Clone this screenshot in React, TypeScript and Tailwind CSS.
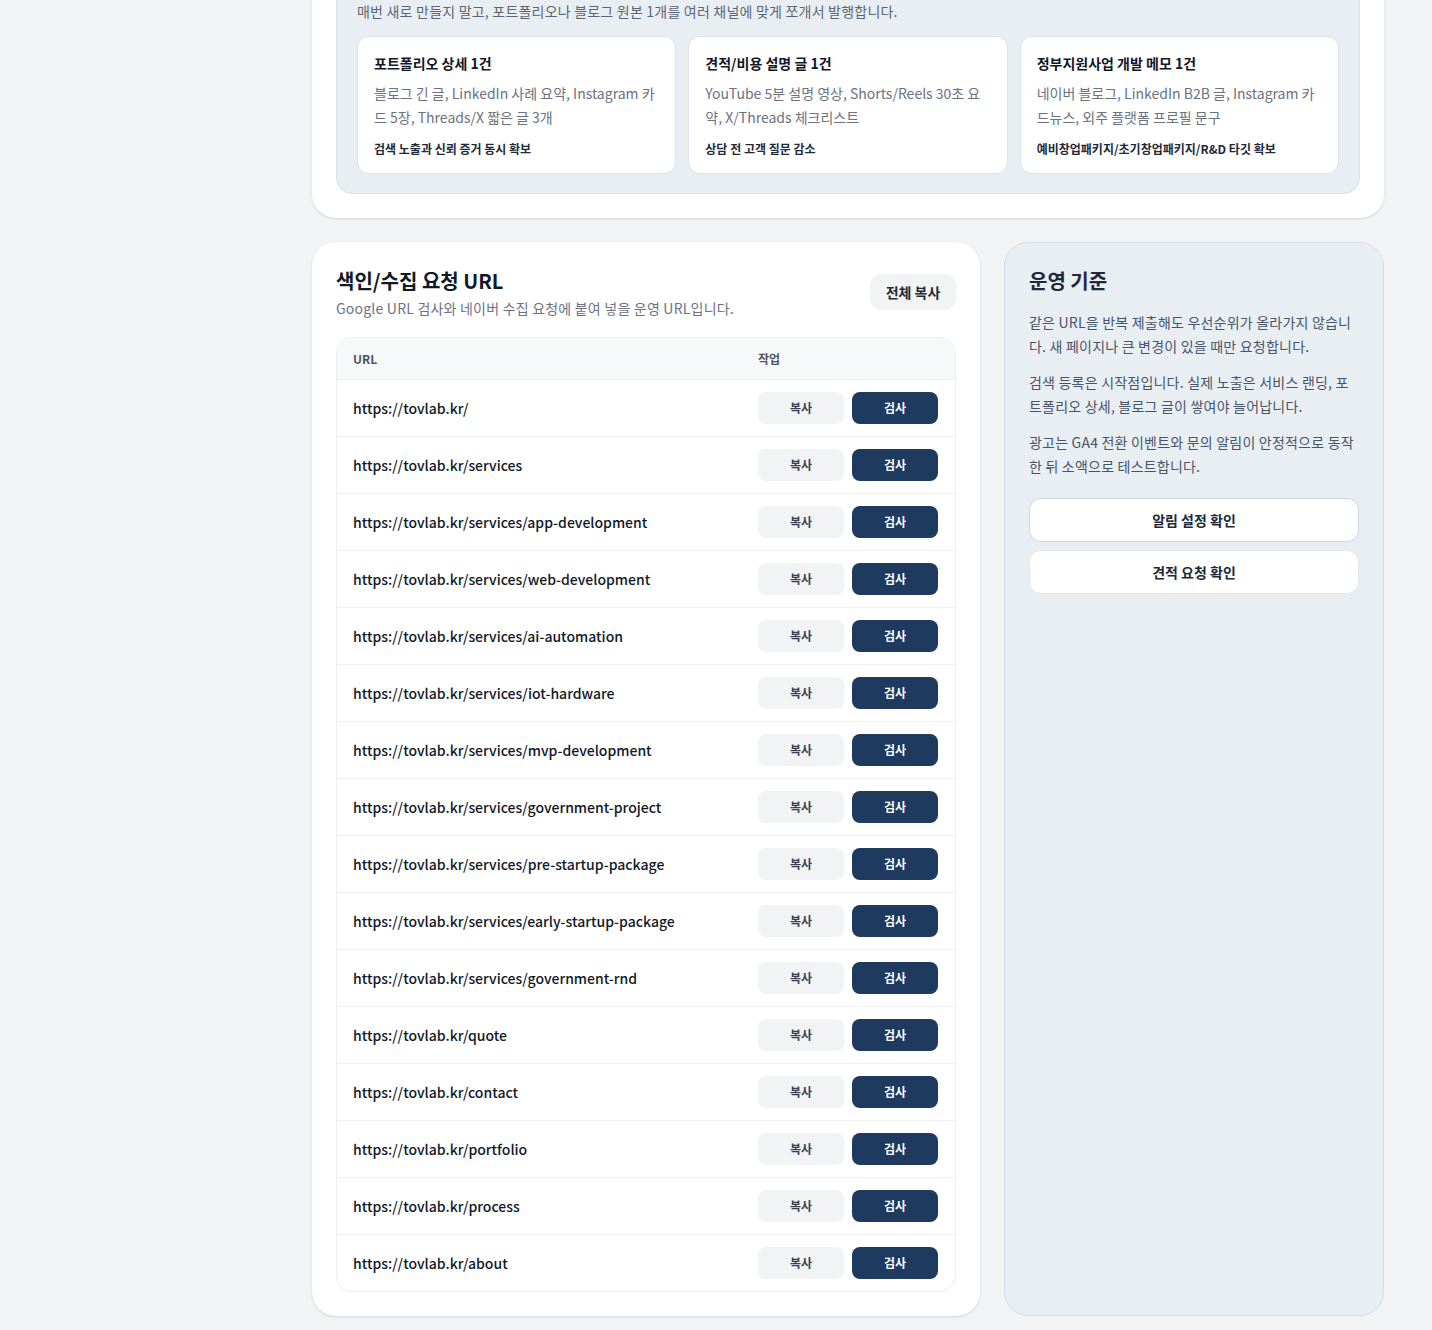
const urls = [
  'https://tovlab.kr/',
  'https://tovlab.kr/services',
  'https://tovlab.kr/services/app-development',
  'https://tovlab.kr/services/web-development',
  'https://tovlab.kr/services/ai-automation',
  'https://tovlab.kr/services/iot-hardware',
  'https://tovlab.kr/services/mvp-development',
  'https://tovlab.kr/services/government-project',
  'https://tovlab.kr/services/pre-startup-package',
  'https://tovlab.kr/services/early-startup-package',
  'https://tovlab.kr/services/government-rnd',
  'https://tovlab.kr/quote',
  'https://tovlab.kr/contact',
  'https://tovlab.kr/portfolio',
  'https://tovlab.kr/process',
  'https://tovlab.kr/about',
];

const repurpose = [
  {
    title: '포트폴리오 상세 1건',
    body: '블로그 긴 글, LinkedIn 사례 요약, Instagram 카드 5장, Threads/X 짧은 글 3개',
    goal: '검색 노출과 신뢰 증거 동시 확보',
  },
  {
    title: '견적/비용 설명 글 1건',
    body: 'YouTube 5분 설명 영상, Shorts/Reels 30초 요약, X/Threads 체크리스트',
    goal: '상담 전 고객 질문 감소',
  },
  {
    title: '정부지원사업 개발 메모 1건',
    body: '네이버 블로그, LinkedIn B2B 글, Instagram 카드뉴스, 외주 플랫폼 프로필 문구',
    goal: '예비창업패키지/초기창업패키지/R&D 타깃 확보',
  },
];

const rules = [
  '같은 URL을 반복 제출해도 우선순위가 올라가지 않습니다. 새 페이지나 큰 변경이 있을 때만 요청합니다.',
  '검색 등록은 시작점입니다. 실제 노출은 서비스 랜딩, 포트폴리오 상세, 블로그 글이 쌓여야 늘어납니다.',
  '광고는 GA4 전환 이벤트와 문의 알림이 안정적으로 동작한 뒤 소액으로 테스트합니다.',
];

export default function App() {
  return (
    <div className="min-h-screen bg-[#f2f3f5] pb-6 pl-[312px] pr-12 font-['Noto_Sans_CJK_KR','Noto_Sans',sans-serif] text-[#111827]">
      <div className="w-[1072px] space-y-6">
        {/* content repurposing */}
        <section className="-mt-[44px] rounded-3xl bg-white p-6 shadow-sm">
          <div className="rounded-2xl border border-[#d9e0e8] bg-[#e9eef3] px-5 pb-[19px] pt-5">
            <p className="text-sm leading-5 tracking-[0.015em] text-[#5b6675]">
              매번 새로 만들지 말고, 포트폴리오나 블로그 원본 1개를 여러 채널에 맞게 쪼개서 발행합니다.
            </p>
            <div className="mt-[15px] grid grid-cols-3 gap-3">
              {repurpose.map((c) => (
                <div key={c.title} className="rounded-xl border border-[#dde3ea] bg-white px-4 py-4">
                  <h3 className="text-sm font-bold leading-5 text-[#111827]">{c.title}</h3>
                  <p className="mt-2 text-sm leading-6 text-[#6b7280]">{c.body}</p>
                  <p className="mt-3 text-xs font-bold leading-4 text-[#1f2a37]">{c.goal}</p>
                </div>
              ))}
            </div>
          </div>
        </section>

        <div className="grid grid-cols-[minmax(0,1fr)_380px] gap-6">
          {/* index request urls */}
          <section className="rounded-3xl bg-white p-6 shadow-sm">
            <div className="flex items-start justify-between">
              <div>
                <h2 className="text-xl font-bold leading-[30px] text-[#111827]">색인/수집 요청 URL</h2>
                <p className="mt-0.5 text-sm leading-5 tracking-[0.015em] text-[#6b7280]">
                  Google URL 검사와 네이버 수집 요청에 붙여 넣을 운영 URL입니다.
                </p>
              </div>
              <button className="mt-2 h-9 w-[86px] rounded-xl bg-[#f1f3f5] text-sm font-bold text-[#1f2937]">
                전체 복사
              </button>
            </div>

            <div className="mt-[19px] overflow-hidden rounded-2xl border border-[#eceef1]">
              <div className="grid h-[42px] grid-cols-[minmax(0,1fr)_213px] items-center border-b border-[#eceef1] bg-[#f7f8fa] text-xs font-bold text-[#4b5563]">
                <div className="px-4">URL</div>
                <div className="px-4">작업</div>
              </div>
              {urls.map((u, i) => (
                <div
                  key={u}
                  className={
                    'grid grid-cols-[minmax(0,1fr)_213px] items-center py-3 ' +
                    (i < urls.length - 1 ? 'border-b border-[#eef0f3]' : '')
                  }
                >
                  <div className="truncate px-4 text-sm font-medium text-[#111827]">{u}</div>
                  <div className="flex gap-2 pl-4">
                    <button className="h-8 w-[86px] rounded-lg bg-[#f1f3f5] text-xs font-bold text-[#374151]">복사</button>
                    <button className="h-8 w-[86px] rounded-lg bg-[#1f3a5f] text-xs font-bold text-white">검사</button>
                  </div>
                </div>
              ))}
            </div>
          </section>

          {/* operating rules */}
          <aside className="rounded-3xl border border-[#d6dde6] bg-[#e9eef3] p-6">
            <h2 className="text-xl font-bold leading-7 text-[#1e2a3a]">운영 기준</h2>
            <div className="mt-[15px] space-y-3">
              {rules.map((r) => (
                <p key={r} className="text-sm leading-6 tracking-[0.015em] text-[#475569]">
                  {r}
                </p>
              ))}
            </div>
            <div className="mt-5 space-y-2">
              <button className="h-11 w-full rounded-xl border border-[#cdd5df] bg-white text-sm font-bold text-[#1e2a3a]">
                알림 설정 확인
              </button>
              <button className="h-11 w-full rounded-xl border border-[#e3e8ee] bg-white text-sm font-bold text-[#1e2a3a]">
                견적 요청 확인
              </button>
            </div>
          </aside>
        </div>
      </div>
    </div>
  );
}
